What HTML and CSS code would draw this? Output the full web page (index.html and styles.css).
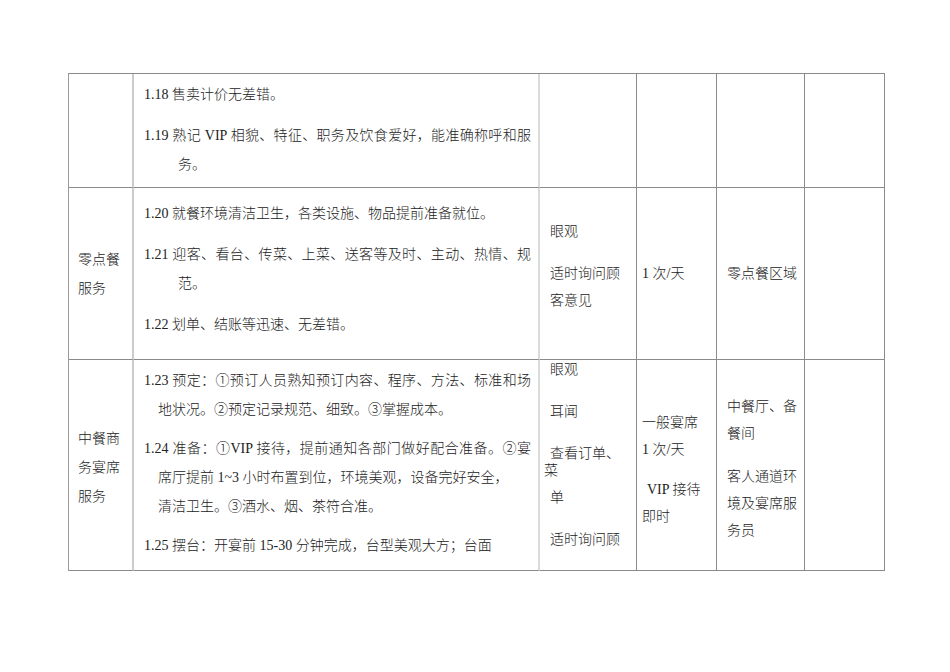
FILE: index.html
```html
<!DOCTYPE html>
<html lang="zh-CN">
<head>
<meta charset="utf-8">
<title>服务质量检查标准</title>
<link rel="stylesheet" href="styles.css">
</head>
<body>
<div class="page">
  <div class="sheet">
    <!-- row 1 -->
    <div class="cell c1 r1"></div>
    <div class="cell c2 r1">
      <div class="para"><div class="line">1.18 售卖计价无差错。</div></div>
      <div class="para">
        <div class="line full">1.19 熟记 VIP 相貌、特征、职务及饮食爱好，能准确称呼和服</div>
        <div class="line cont">务。</div>
      </div>
    </div>
    <div class="cell c3 r1"></div>
    <div class="cell c4 r1"></div>
    <div class="cell c5 r1"></div>
    <div class="cell c6 r1"></div>

    <!-- row 2 -->
    <div class="cell c1 r2 mid">
      <div class="line">零点餐</div>
      <div class="line">服务</div>
    </div>
    <div class="cell c2 r2">
      <div class="para"><div class="line">1.20 就餐环境清洁卫生，各类设施、物品提前准备就位。</div></div>
      <div class="para">
        <div class="line full">1.21 迎客、看台、传菜、上菜、送客等及时、主动、热情、规</div>
        <div class="line cont">范。</div>
      </div>
      <div class="para"><div class="line">1.22 划单、结账等迅速、无差错。</div></div>
    </div>
    <div class="cell c3 r2">
      <div class="para"><div class="line">眼观</div></div>
      <div class="para">
        <div class="line">适时询问顾</div>
        <div class="line">客意见</div>
      </div>
    </div>
    <div class="cell c4 r2 mid"><div class="line">1 次/天</div></div>
    <div class="cell c5 r2 mid"><div class="line">零点餐区域</div></div>
    <div class="cell c6 r2"></div>

    <!-- row 3 -->
    <div class="cell c1 r3 mid">
      <div class="line">中餐商</div>
      <div class="line">务宴席</div>
      <div class="line">服务</div>
    </div>
    <div class="cell c2 r3">
      <div class="para">
        <div class="line full">1.23 预定：①预订人员熟知预订内容、程序、方法、标准和场</div>
        <div class="line cont-s">地状况。②预定记录规范、细致。③掌握成本。</div>
      </div>
      <div class="para">
        <div class="line full">1.24 准备：①VIP 接待，提前通知各部门做好配合准备。②宴</div>
        <div class="line cont-s">席厅提前 1~3 小时布置到位，环境美观，设备完好安全，</div>
        <div class="line cont-s">清洁卫生。③酒水、烟、茶符合准。</div>
      </div>
      <div class="para"><div class="line">1.25 摆台：开宴前 15-30 分钟完成，台型美观大方；台面</div></div>
    </div>
    <div class="cell c3 r3">
      <div class="para first"><div class="line">眼观</div></div>
      <div class="para"><div class="line">耳闻</div></div>
      <div class="para">
        <div class="line">查看订单、</div>
        <div class="line flush squeeze">菜</div>
        <div class="line">单</div>
      </div>
      <div class="para"><div class="line">适时询问顾</div></div>
    </div>
    <div class="cell c4 r3">
      <div class="para">
        <div class="line">一般宴席</div>
        <div class="line">1 次/天</div>
      </div>
      <div class="para">
        <div class="line shift">VIP 接待</div>
        <div class="line">即时</div>
      </div>
    </div>
    <div class="cell c5 r3">
      <div class="para">
        <div class="line">中餐厅、备</div>
        <div class="line">餐间</div>
      </div>
      <div class="para">
        <div class="line">客人通道环</div>
        <div class="line">境及宴席服</div>
        <div class="line">务员</div>
      </div>
    </div>
    <div class="cell c6 r3"></div>
  </div>
</div>
</body>
</html>
```

FILE: styles.css
```css
html, body {
  margin: 0;
  padding: 0;
  background: #ffffff;
}

body {
  color: #222222;
  font-family: "Liberation Serif", "Noto Sans CJK SC", serif;
  font-size: 14px;
  font-weight: 300;
}

.page {
  padding: 73px 0 0 68px;
}

.sheet {
  display: grid;
  grid-template-columns: 65px 406px 97px 80px 88px 80px;
  grid-template-rows: 114px 172px 211px;
  width: max-content;
  border-top: 1px solid #8a8a8a;
  border-left: 1px solid #9a9a9a;
}

.cell {
  box-sizing: border-box;
  display: flex;
  flex-direction: column;
  border-right: 1px solid #8a8a8a;
  border-bottom: 1px solid #8a8a8a;
  min-width: 0;
}

.line {
  white-space: nowrap;
}

.mid {
  justify-content: center;
}

/* column 1: item name */
.c1 {
  border-right: 2px solid #cccccc;
  padding-left: 9px;
}
.c1 .line {
  line-height: 29px;
}
.c1.r3 {
  padding-top: 5px;
}

/* column 2: standards */
.c2 {
  border-right: 2px solid #dadada;
  padding: 6px 7px 0 10px;
}
.c2 .line {
  line-height: 29px;
}
.c2 .para + .para {
  margin-top: 12px;
}
.c2.r2 {
  padding-top: 11px;
}
.c2.r3 .para + .para {
  margin-top: 10px;
}
.c2 .full {
  text-align: justify;
  text-align-last: justify;
}
.c2 .cont {
  padding-left: 34px;
}
.c2 .cont-s {
  padding-left: 14px;
}

/* columns 3-5 */
.c3 .line,
.c4 .line,
.c5 .line {
  line-height: 27px;
}

.c3 {
  padding-left: 10px;
}
.c3.r2 {
  padding-top: 30px;
}
.c3 .para + .para {
  margin-top: 15px;
}
.c3 .first {
  margin-top: -4.5px;
}
.c3 .flush {
  margin-left: -6px;
}
.c3 .squeeze {
  margin-top: -9.5px;
}

.c4 {
  padding-left: 5px;
}
.c4.r3 {
  padding-top: 49px;
}
.c4 .para + .para {
  margin-top: 12.5px;
}
.c4 .shift {
  padding-left: 5px;
}

.c5 {
  padding-left: 10px;
}
.c5.r3 {
  padding-top: 32.5px;
}
.c5 .para + .para {
  margin-top: 16px;
}
```
